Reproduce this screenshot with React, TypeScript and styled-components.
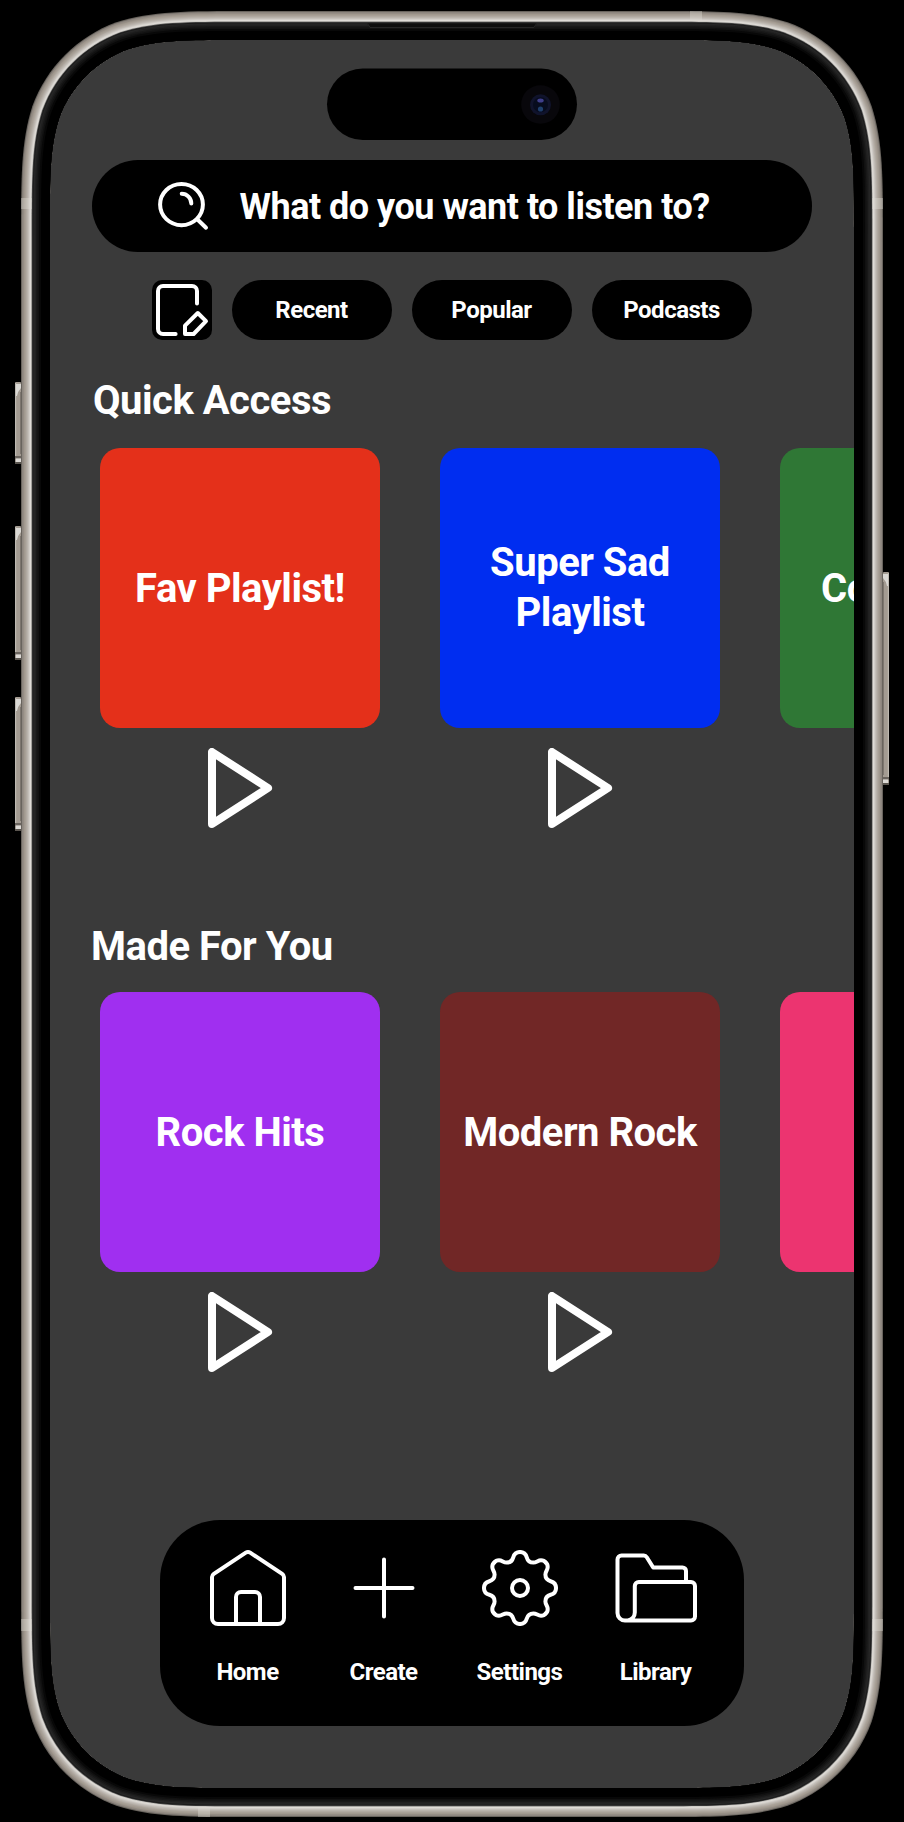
import React from "react";
import styled, { createGlobalStyle } from "styled-components";

const GlobalStyle = createGlobalStyle`
  *, *::before, *::after { box-sizing: border-box; }
  body { margin: 0; background: #000; }
`;

const Page = styled.main`
  position: relative;
  width: 904px;
  height: 1822px;
  padding: 40px 50px 34px;
  background: #000;
  overflow: hidden;
  font-family: Roboto, "Liberation Sans", sans-serif;
  font-weight: 700;
  letter-spacing: -0.5px;
  color: #fff;
`;

const Screen = styled.div`
  display: flex;
  flex-direction: column;
  width: 804px;
  height: 1748px;
  padding-top: 120px;
  background: #3a3a3a;
  overflow: hidden;
`;

const SearchBar = styled.div`
  display: flex;
  flex: none;
  align-items: center;
  width: 720px;
  height: 92px;
  margin: 0 auto;
  padding-left: 60px;
  gap: 27.5px;
  border-radius: 46px;
  background: #000;
  font-size: 36px;
  line-height: 44px;
  white-space: nowrap;
`;

const SearchHint = styled.span`
  padding-top: 2px;
`;

const FilterRow = styled.div`
  display: flex;
  flex: none;
  gap: 20px;
  margin: 28px 0 0 102px;
`;

const EditButton = styled.button`
  width: 60px;
  height: 60px;
  padding: 0;
  border: 0;
  border-radius: 10px;
  background: #000;
`;

const Pill = styled.button`
  width: 160px;
  height: 60px;
  padding: 0 1px 0 0;
  border: 0;
  border-radius: 30px;
  background: #000;
  color: #fff;
  font: inherit;
  font-size: 24px;
  letter-spacing: inherit;
`;

const Section = styled.section<{ $top: number; $gap: number }>`
  display: flex;
  flex: none;
  flex-direction: column;
  gap: ${(p) => p.$gap}px;
  margin-top: ${(p) => p.$top}px;
`;

const SectionTitle = styled.h2<{ $indent: number }>`
  width: 240px;
  height: 50px;
  margin: 0 0 0 ${(p) => p.$indent}px;
  font-size: 40px;
  font-weight: 700;
  line-height: 50px;
  text-align: center;
  white-space: nowrap;
`;

const Shelf = styled.div`
  display: flex;
  gap: 60px;
  padding-left: 50px;
`;

const Playlist = styled.article`
  display: flex;
  flex: none;
  flex-direction: column;
  align-items: center;
  gap: 20px;
`;

const Cover = styled.div<{ $color: string; $nudge?: number }>`
  display: flex;
  align-items: center;
  justify-content: center;
  width: 280px;
  height: 280px;
  padding: ${(p) => p.$nudge ?? 1}px 20px 0;
  border-radius: 20px;
  background: ${(p) => p.$color};
  font-size: 40px;
  line-height: 50px;
  text-align: center;
`;

const NavBar = styled.nav`
  display: flex;
  flex: none;
  width: 584px;
  height: 206px;
  margin: auto auto 62px;
  padding: 28px 20px 0;
  border-radius: 60px;
  background: #000;
`;

const NavItem = styled.a`
  display: flex;
  flex-direction: column;
  align-items: center;
  width: 136px;
  gap: 30px;
  font-size: 24px;
  line-height: 28px;
`;

const NavLabel = styled.span`
  padding-right: 1px;
`;

const Icon = styled.svg<{ $weight?: number }>`
  display: block;
  flex: none;
  fill: none;
  stroke: #fff;
  stroke-width: ${(p) => p.$weight ?? 4};
  stroke-linecap: round;
  stroke-linejoin: round;
`;

const Hardware = styled.svg`
  position: absolute;
  inset: 0;
  pointer-events: none;
`;

const SearchIcon = () => (
  <Icon width={60} height={60} viewBox="0 0 60 60">
    <ellipse cx="29.5" cy="28.6" rx="21.4" ry="20.6" />
    <path d="M45.5 43.5 54 51.7M29.7 17.8a9.6 9.6 0 0 1 9.6 9.6" />
  </Icon>
);

const EditIcon = () => (
  <Icon width={60} height={60} viewBox="0 0 60 60">
    <path d="M45 23.5V11a5 5 0 0 0-5-5H11a5 5 0 0 0-5 5v38a5 5 0 0 0 5 5h12.6" />
    <path d="M45.8 33 54 41.2 41.6 54H33V45.6Z" />
  </Icon>
);

const PlayIcon = () => (
  <Icon width={80} height={80} viewBox="0 0 80 80" $weight={8}>
    <path d="M12 4V76L68 40Z" />
  </Icon>
);

const HomeIcon = () => (
  <Icon width={80} height={80} viewBox="0 0 80 80">
    <path d="M37.8 4.7a4 4 0 0 1 4.4 0L74.2 25.8A4 4 0 0 1 76 29.2V70a6 6 0 0 1-6 6H10a6 6 0 0 1-6-6V29.2a4 4 0 0 1 1.8-3.4Z" />
    <path d="M28 76V49a5 5 0 0 1 5-5h14a5 5 0 0 1 5 5v27" />
  </Icon>
);

const PlusIcon = () => (
  <Icon width={80} height={80} viewBox="0 0 80 80">
    <path d="M40 11.5v57M11.5 40h57" />
  </Icon>
);

// One eighth of the cog outline, mirrored and rotated around the hub.
const COG_EIGHTH =
  "M0-36C3.8-36 6-33.6 6.8-30.6C7.6-27.6 10-25.4 13.4-25.4C16.6-25.4 17.8-27.7 21-27.7C23-27.7 24.7-26.9 25.6-25.6";

const GearIcon = () => (
  <Icon width={80} height={80} viewBox="-40 -40 80 80">
    <circle r="8" />
    {[0, 90, 180, 270].map((angle) => (
      <g key={angle} transform={`rotate(${angle})`}>
        <path d={COG_EIGHTH} />
        <path d={COG_EIGHTH} transform="scale(-1 1)" />
      </g>
    ))}
  </Icon>
);

const LibraryIcon = () => (
  <Icon width={84} height={80} viewBox="-2 0 84 80">
    <path d="M70 32V23a3.5 3.5 0 0 0-3.5-3.5H37.2L30.8 9.2A3.6 3.6 0 0 0 27.6 7.5H5.5a4 4 0 0 0-4 4V65a7.5 7.5 0 0 0 7.5 7.5H75a4 4 0 0 0 4-4V38a4 4 0 0 0-4-4H22.8a4 4 0 0 0-4 4V64.5a8 8 0 0 1-7 8" />
  </Icon>
);

// Continuous-curvature rounded rectangle, centred on the device.
const squircle = (halfW: number, halfH: number, r: number) => {
  const corner = [
    [1.528665, 0],
    [1.088493, 0],
    [0.868407, 0],
    [0.631494, 0.074911],
    [0.372824, 0.16906],
    [0.16906, 0.372824],
    [0.074911, 0.631494],
    [0, 0.868407],
    [0, 1.088493],
    [0, 1.528665],
  ];
  const at = (sx: number, sy: number, [u, v]: number[]) =>
    `${(452 + sx * (halfW - u * r)).toFixed(2)} ${(914 + sy * (halfH - v * r)).toFixed(2)}`;
  const draw = (sx: number, sy: number, flip: boolean) => {
    // Both curves share the middle bend, so the two control sets meet at p[3] and p[6].
    const p = (flip ? [...corner].reverse() : corner).map((c) => at(sx, sy, c));
    return `${p[0]}C${p[1]} ${p[2]} ${p[3]}C${p[4]} ${p[5]} ${p[6]}C${p[7]} ${p[8]} ${p[9]}`;
  };
  return `M${draw(1, -1, false)}L${draw(1, 1, true)}L${draw(-1, 1, false)}L${draw(-1, -1, true)}Z`;
};

const BODY_LAYERS: [number, string][] = [
  [0, "#69645e"],
  [1, "#8d867f"],
  [2, "#958d85"],
  [3, "#a1998f"],
  [4, "#a8a097"],
  [5, "#b0a9a1"],
  [6, "#b9b3ac"],
  [7, "#c4bfb9"],
  [8, "#d2cec9"],
  [9, "#dfdcd7"],
  [10, "#c9c6c1"],
  [10.7, "#4a4a4a"],
  [11.4, "#1c1c1c"],
  [12.4, "#272727"],
  [13.6, "#202020"],
  [15, "#181818"],
  [16.5, "#111"],
  [18, "#080808"],
  [20, "#000"],
];

const SCREEN_EDGE = squircle(402, 874, 124);

const SideKey = ({ x, y, height, flip }: { x: number; y: number; height: number; flip?: boolean }) => (
  <g transform={flip ? `translate(${x + 6} ${y}) scale(-1 1)` : `translate(${x} ${y})`}>
    <rect width="6" height={height} rx="1" fill="#a39b92" />
    <rect y="1" width="1.2" height={height - 7} fill="#bdb8b1" />
    <rect x="5" y="10" width="1" height={height - 20} fill="#7d766f" />
    <path d="M1 2H6V6Q3 9 2 14H1Z" fill="#dad8d4" />
    <rect y={height - 8} width="6" height="2.5" fill="#6a645e" />
    <rect x="1" y={height - 5.5} width="5" height="3.5" fill="#dcd9d5" />
    <rect y={height - 2} width="6" height="2" fill="#5a554f" />
  </g>
);

const Device = () => (
  <Hardware width={904} height={1822} viewBox="0 0 904 1822">
    <defs>
      <clipPath id="outside-screen">
        <path clipRule="evenodd" d={`M0 0H904V1822H0Z${SCREEN_EDGE}`} />
      </clipPath>
    </defs>
    <g clipPath="url(#outside-screen)">
      <rect width="904" height="1822" fill="#000" />
      <SideKey x={15} y={382} height={82} />
      <SideKey x={15} y={526} height={134} />
      <SideKey x={15} y={697} height={134} />
      <SideKey x={883} y={572} height={213} flip />
      {BODY_LAYERS.map(([inset, color]) => (
        <path key={inset} d={squircle(431 - inset, 903 - inset, 151 - inset)} fill={color} />
      ))}
      <g fill="#dedbd5" fillOpacity="0.4">
        <rect x="21" y="198" width="11" height="11" />
        <rect x="872" y="198" width="11" height="11" />
        <rect x="21" y="1619" width="11" height="12" />
        <rect x="872" y="1619" width="11" height="12" />
        <rect x="690" y="11" width="12" height="10" />
        <rect x="198" y="1807" width="12" height="10" />
      </g>
      <path d="M367 23.5H537L534 28H370Z" fill="#0e0e0e" />
      <path d="M367.5 23.5 370 27.5H534L536.5 23.5" fill="none" stroke="#262626" />
    </g>
    <rect x="327" y="68.5" width="250" height="71.5" rx="35.7" fill="#000" />
    <circle cx="540.5" cy="104.5" r="19.3" fill="#08070b" />
    <circle cx="540.5" cy="104.8" r="10.5" fill="#10132b" />
    <circle cx="540.5" cy="104.8" r="7.5" fill="#070c1e" />
    <ellipse cx="540.5" cy="100.5" rx="3.2" ry="2" fill="#3f3f8c" />
    <ellipse cx="540.5" cy="109" rx="2.6" ry="2.6" fill="#1f3f6c" />
  </Hardware>
);

type Item = { name: string; color: string; nudge?: number };

const shelves: { title: string; top: number; gap: number; indent: number; items: Item[] }[] = [
  {
    title: "Quick Access",
    top: 36,
    gap: 22,
    indent: 42,
    items: [
      { name: "Fav Playlist!", color: "#e4301a" },
      { name: "Super Sad Playlist", color: "#002df0", nudge: 0 },
      { name: "Coding Mix", color: "#2f7735" },
    ],
  },
  {
    title: "Made For You",
    top: 94,
    gap: 20,
    indent: 41,
    items: [
      { name: "Rock Hits", color: "#a02ff0" },
      { name: "Modern Rock", color: "#712726" },
      { name: "", color: "#ec3470" },
    ],
  },
];

const destinations = [
  { label: "Home", Glyph: HomeIcon },
  { label: "Create", Glyph: PlusIcon },
  { label: "Settings", Glyph: GearIcon },
  { label: "Library", Glyph: LibraryIcon },
];

export default function App() {
  return (
    <Page>
      <GlobalStyle />
      <Screen>
        <SearchBar>
          <SearchIcon />
          <SearchHint>What do you want to listen to?</SearchHint>
        </SearchBar>
        <FilterRow>
          <EditButton>
            <EditIcon />
          </EditButton>
          <Pill>Recent</Pill>
          <Pill>Popular</Pill>
          <Pill>Podcasts</Pill>
        </FilterRow>
        {shelves.map((shelf) => (
          <Section key={shelf.title} $top={shelf.top} $gap={shelf.gap}>
            <SectionTitle $indent={shelf.indent}>{shelf.title}</SectionTitle>
            <Shelf>
              {shelf.items.map((item) => (
                <Playlist key={item.color}>
                  <Cover $color={item.color} $nudge={item.nudge}>
                    {item.name}
                  </Cover>
                  <PlayIcon />
                </Playlist>
              ))}
            </Shelf>
          </Section>
        ))}
        <NavBar>
          {destinations.map(({ label, Glyph }) => (
            <NavItem key={label}>
              <Glyph />
              <NavLabel>{label}</NavLabel>
            </NavItem>
          ))}
        </NavBar>
      </Screen>
      <Device />
    </Page>
  );
}
